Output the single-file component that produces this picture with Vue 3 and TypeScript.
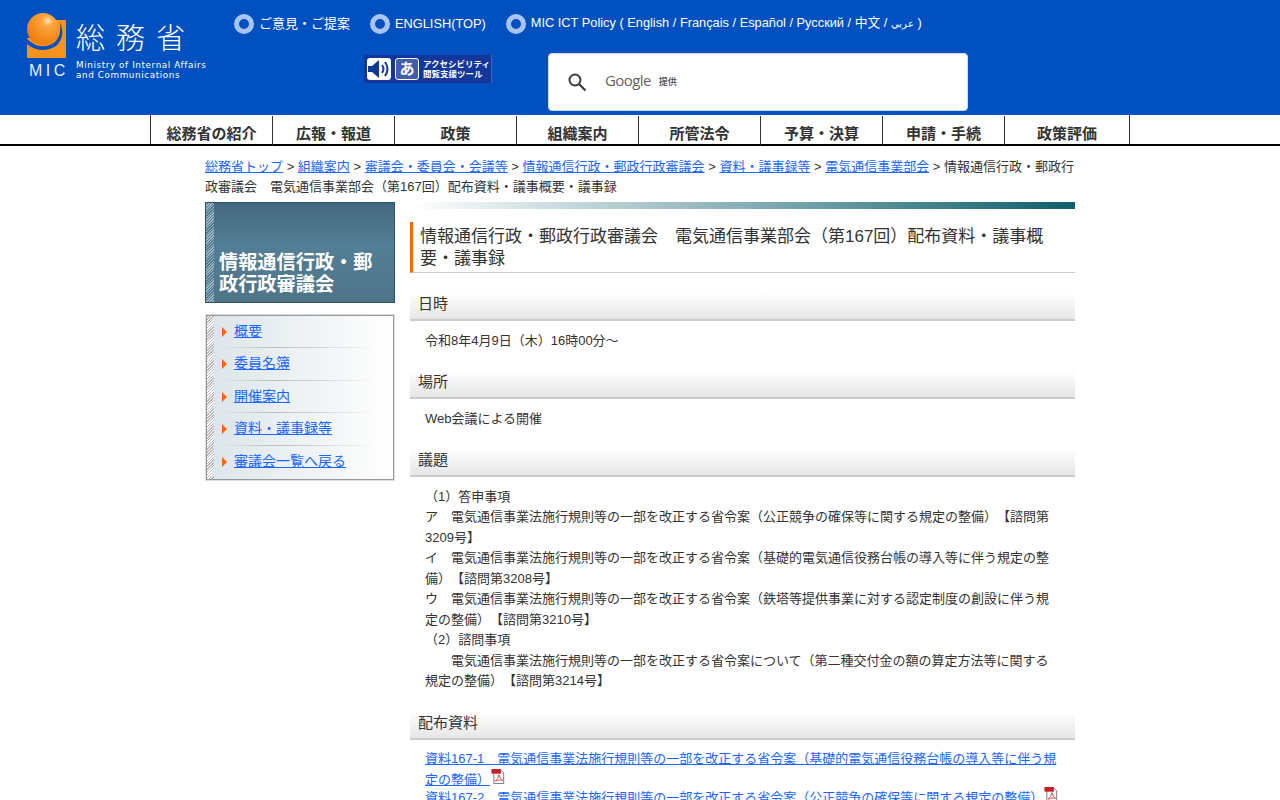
<script setup lang="ts">
type LinkItem = { label: string }

const topLinks = ['ご意見・ご提案', 'ENGLISH(TOP)']
const navItems = ['総務省の紹介', '広報・報道', '政策', '組織案内', '所管法令', '予算・決算', '申請・手続', '政策評価']
const crumbs = ['総務省トップ', '組織案内', '審議会・委員会・会議等', '情報通信行政・郵政行政審議会', '資料・議事録等', '電気通信事業部会']
const sideMenu: LinkItem[] = [
  { label: '概要' },
  { label: '委員名簿' },
  { label: '開催案内' },
  { label: '資料・議事録等' },
  { label: '審議会一覧へ戻る' }
]
const agenda = [
  '（1）答申事項',
  'ア　電気通信事業法施行規則等の一部を改正する省令案（公正競争の確保等に関する規定の整備）【諮問第3209号】',
  'イ　電気通信事業法施行規則等の一部を改正する省令案（基礎的電気通信役務台帳の導入等に伴う規定の整備）【諮問第3208号】',
  'ウ　電気通信事業法施行規則等の一部を改正する省令案（鉄塔等提供事業に対する認定制度の創設に伴う規定の整備）【諮問第3210号】',
  '（2）諮問事項',
  '　　電気通信事業法施行規則等の一部を改正する省令案について（第二種交付金の額の算定方法等に関する規定の整備）【諮問第3214号】'
]
const docs = [
  '資料167-1　電気通信事業法施行規則等の一部を改正する省令案（基礎的電気通信役務台帳の導入等に伴う規定の整備）',
  '資料167-2　電気通信事業法施行規則等の一部を改正する省令案（公正競争の確保等に関する規定の整備）'
]
</script>

<template>
  <div class="page">
    <header class="header">
      <a class="logo" href="#">
        <div class="mark">
          <svg width="40" height="46" viewBox="0 0 40 46">
            <defs>
              <radialGradient id="ball" cx="0.65" cy="0.25" r="0.8">
                <stop offset="0" stop-color="#ffe0b8" />
                <stop offset="0.22" stop-color="#fba63f" />
                <stop offset="1" stop-color="#ec7a05" />
              </radialGradient>
            </defs>
            <rect x="0" y="7" width="39" height="38" fill="#f6931e" />
            <path d="M0 0h32v7h-4q-8 10-14 14t-14 4z" fill="#0050bf" />
            <circle cx="16" cy="16" r="16" fill="url(#ball)" />
            <path d="M0 26 Q14 39 28 29 Q35 22 33 9 Q39 24 29 33 Q14 42 0 31Z" fill="#0050bf" />
          </svg>
          <span class="mic">MIC</span>
        </div>
        <div class="logo-text">
          <div class="kanji">総 務 省</div>
          <div class="english">Ministry of Internal Affairs<br />and Communications</div>
        </div>
      </a>
      <div class="header-right">
        <ul class="top-links">
          <li v-for="t in topLinks" :key="t"><span class="ring"></span>{{ t }}</li>
          <li>
            <span class="ring"></span>
            <span>MIC ICT Policy ( English / Français / Español / Русский / 中文 / <span class="arabic">عربي</span> )</span>
          </li>
        </ul>
        <div class="tools">
          <div class="access">
            <span class="access-icon white">
              <svg width="24" height="22" viewBox="0 0 24 22">
                <path d="M1 8h4l7-6v18l-7-6H1z" fill="#0b3a94" />
                <path d="M15 7q3 4 0 8M18 4q5 7 0 14" fill="none" stroke="#0b3a94" stroke-width="2" />
              </svg>
            </span>
            <span class="access-icon blue">あ</span>
            <span class="access-text">アクセシビリティ<br />閲覧支援ツール</span>
          </div>
          <div class="search">
            <svg class="glass" width="20" height="20" viewBox="0 0 20 20">
              <circle cx="8" cy="8" r="5.500" fill="none" stroke="#3c3c3c" stroke-width="2" />
              <path d="M12 12l6.500 6.500" stroke="#3c3c3c" stroke-width="2.200" />
            </svg>
            <span class="google">Google</span>
            <span class="teikyo">提供</span>
          </div>
        </div>
      </div>
    </header>

    <nav class="nav">
      <ul>
        <li v-for="n in navItems" :key="n">{{ n }}</li>
      </ul>
    </nav>

    <div class="wrap">
      <p class="crumbs">
        <template v-for="c in crumbs" :key="c"><a href="#">{{ c }}</a> &gt; </template>情報通信行政・郵政行政審議会　電気通信事業部会（第167回）配布資料・議事概要・議事録
      </p>
      <div class="columns">
        <aside class="side">
          <div class="side-title"><span>情報通信行政・郵政行政審議会</span></div>
          <ul class="side-menu">
            <li v-for="m in sideMenu" :key="m.label"><a href="#">{{ m.label }}</a></li>
          </ul>
        </aside>
        <main class="main">
          <div class="topbar"></div>
          <h1>情報通信行政・郵政行政審議会　電気通信事業部会（第167回）配布資料・議事概要・議事録</h1>
          <h2>日時</h2>
          <p class="body">令和8年4月9日（木）16時00分～</p>
          <h2>場所</h2>
          <p class="body">Web会議による開催</p>
          <h2>議題</h2>
          <div class="body agenda">
            <div v-for="a in agenda" :key="a">{{ a }}</div>
          </div>
          <h2 class="docs-head">配布資料</h2>
          <div class="body docs">
            <div v-for="d in docs" :key="d" class="doc">
              <a href="#">{{ d }}</a><svg class="pdf" width="15" height="15" viewBox="0 0 15 16">
                <path d="M2.500 .5h7l3.500 3.500v11.500h-10.500z" fill="#fff" stroke="#777" />
                <rect x="0" y="0" width="10" height="5" fill="#c8202a" />
                <path d="M4 13q3-2 4-7q1 5 4 6q-4-1-8 1z" fill="none" stroke="#c8202a" stroke-width=".8" />
              </svg>
            </div>
          </div>
        </main>
      </div>
    </div>
  </div>
</template>

<style>
html, body { margin: 0; overflow: hidden; }
</style>

<style scoped>
.page {
  height: 800px;
  overflow: hidden;
  background: #fff;
  color: #333;
  font-family: "Liberation Sans", "Noto Sans CJK JP", sans-serif;
  font-size: 13px;
  line-height: 20.480px;
  text-spacing-trim: space-all;
}
ul { list-style: none; margin: 0; padding: 0; }
p { margin: 0; }
a { color: #1a66ff; }

.header {
  display: flex;
  height: 115px;
  background: #0050bf;
  color: #fff;
}
.logo {
  display: flex;
  width: 234px;
  box-sizing: border-box;
  padding: 13px 0 0 27px;
  color: #fff;
  text-decoration: none;
}
.mark { width: 40px; display: flex; flex-direction: column; }
.mark svg { display: block; }
.mic {
  font-size: 16px;
  line-height: 16px;
  letter-spacing: 3.500px;
  margin: 4px 0 0 2px;
  color: #e6eefc;
  white-space: nowrap;
}
.logo-text { margin-left: 9px; }
.kanji { font-size: 29px; line-height: 36px; margin-top: 8px; white-space: nowrap; letter-spacing: 1.500px; font-weight: 300; }
.english {
  font-family: "DejaVu Sans", sans-serif;
  font-size: 8.800px;
  line-height: 10px;
  margin-top: 3px;
  white-space: nowrap;
  letter-spacing: .6px;
}
.header-right { flex: 1; }
.top-links {
  display: flex;
  gap: 20px;
  height: 48px;
  padding-top: 14px;
  box-sizing: border-box;
  align-items: flex-start;
}
.top-links li { display: flex; align-items: center; height: 20px; white-space: nowrap; }
.top-links li:not(:first-child) { font-size: 12.800px; }
.arabic { font-size: 10px; }
.ring {
  width: 10px;
  height: 10px;
  border: 5px solid #a9c4ee;
  border-radius: 50%;
  background: #0050bf;
  margin-right: 5px;
}
.tools { display: flex; align-items: flex-start; margin-top: 5px; }
.access {
  display: flex;
  align-items: center;
  gap: 4px;
  margin: 2px 0 0 130px;
  width: 128px;
  height: 28px;
  box-sizing: border-box;
  padding-left: 3px;
  background: #12369a;
  border-right: 1px solid #3d68c4;
}
.access-icon {
  width: 24px;
  height: 22px;
  border-radius: 3px;
  display: flex;
  align-items: center;
  justify-content: center;
}
.access-icon.white { background: #fff; }
.access-icon.blue {
  background: #3f5fa8;
  border: 1px solid #fff;
  box-sizing: border-box;
  color: #fff;
  font-weight: 700;
  font-size: 15px;
}
.access-text { font-size: 8.500px; line-height: 10px; font-weight: 700; white-space: nowrap; }
.search {
  display: flex;
  align-items: center;
  width: 420px;
  height: 58px;
  margin-left: 56px;
  background: #fff;
  border-radius: 4px;
  box-sizing: border-box;
  padding-left: 18px;
  color: #5f6368;
  border: 1px solid #d8d8d8;
}
.glass { margin-right: 18px; }
.google { font-family: "Open Sans", sans-serif; font-size: 15px; letter-spacing: -.6px; margin-top: -4px; }
.teikyo { font-size: 9px; margin-left: 8px; color: #444; margin-top: 1px; font-weight: 500; }

.nav { border-bottom: 2px solid #000; height: 29px; }
.nav ul { display: flex; margin-left: 150px; width: 980px; box-sizing: border-box; border-left: 1px solid #333; border-right: 1px solid #333; height: 29px; }
.nav li {
  width: 122px;
  box-sizing: border-box;
  border-right: 1px solid #333;
  text-align: center;
  font-weight: 700;
  font-size: 15px;
  line-height: 35px;
  height: 29px;
  margin-top: 1px;
  white-space: nowrap;
}
.nav li:last-child { border-right: 0; flex: 1; }

.wrap { width: 870px; margin: 11px 0 0 205px; }
.crumbs { color: #333; }
.columns { display: flex; gap: 15px; margin-top: 4px; align-items: flex-start; }
.side { width: 190px; flex: none; }
.side-title {
  height: 101px;
  box-sizing: border-box;
  border: 1px solid #2c5266;
  background:
    repeating-linear-gradient(135deg, #9fb6c2 0 1px, #4d7a90 1px 2px) left top / 8px 100% no-repeat,
    linear-gradient(180deg, #44687f 0%, #537e95 45%, #4f7489 100%);
  padding: 49px 8px 0 13px;
  color: #fff;
  font-size: 19.200px;
  line-height: 22px;
  font-weight: 700;
}
.side-menu {
  margin-top: 12px;
  height: 165px;
  box-sizing: border-box;
  border: 1px solid #999;
  outline: 1px solid #ddd;
  background:
    repeating-linear-gradient(135deg, #bbb 0 1px, #fff 1px 2px) left top / 7px 100% no-repeat,
    linear-gradient(90deg, #dbe5ea 0%, #fff 100%);
  padding: 0 0 0 15px;
  width: 188px;
  margin-left: 1px;
}
.side-menu li {
  position: relative;
  height: 32.500px;
  box-sizing: border-box;
  padding: 5px 0 0 12px;
  font-size: 14px;
  border-bottom: 1px solid;
  border-image: linear-gradient(90deg, transparent, #bbb 30%, transparent 90%) 1;
}
.side-menu li:last-child { border-bottom: 0; }
.side-menu li::before {
  content: "";
  position: absolute;
  left: 0;
  top: 11px;
  border-left: 5px solid #f60;
  border-top: 5px solid transparent;
  border-bottom: 5px solid transparent;
}
.main { width: 665px; }
.topbar { height: 7px; background: linear-gradient(90deg, #fff 0%, #0f5f6c 100%); }
h1 {
  margin: 13px 0 0;
  padding: 4px 20px 2px 7px;
  border-left: 3px solid #f60;
  border-bottom: 1px solid #ccc;
  font-size: 17px;
  line-height: 22px;
  font-weight: 400;
  color: #333;
  height: 44px;
}
h2 {
  margin: 20px 0 0;
  height: 28px;
  box-sizing: border-box;
  padding-left: 8px;
  background: linear-gradient(180deg, #fff 0%, #e6e6e6 100%);
  border-bottom: 2px solid #ccc;
  font-size: 15px;
  line-height: 21px;
  font-weight: 400;
  color: #333;
}
.body { padding: 10px 15px 0; }
.body + h2 { margin-top: 19.500px; }
.agenda { padding-right: 25px; }
.docs { padding-top: 8.500px; padding-right: 15px; }
.doc { line-height: 21px; }
.doc + .doc { margin-top: -3px; }
.pdf { vertical-align: 0; margin-left: 1px; }
.body + .docs-head { margin-top: 20px; }
</style>
